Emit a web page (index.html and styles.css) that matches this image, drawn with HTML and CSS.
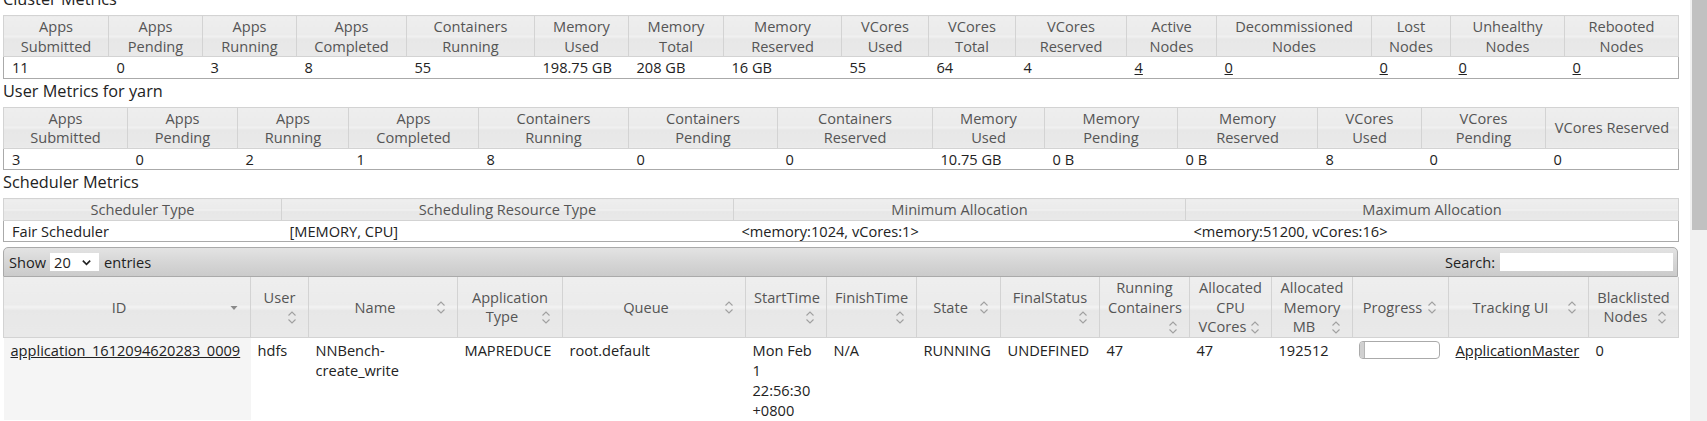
FILE: index.html
```html
<!DOCTYPE html>
<html>
<head>
<meta charset="utf-8">
<title>Applications</title>
<link rel="stylesheet" href="styles.css">
</head>
<body>
<svg class="defs" width="0" height="0" aria-hidden="true">
  <symbol id="ico-sort" viewBox="0 0 16 16"><path d="M4.5 6.5 8 3 11.5 6.5M4.5 10.5 8 14 11.5 10.5" fill="none" stroke="#a0a0a0" stroke-width="1.1"/></symbol>
  <symbol id="ico-desc" viewBox="0 0 16 16"><path d="M4.5 7h7L8 11z" fill="#8a8a8a"/></symbol>
  <symbol id="ico-chev" viewBox="0 0 12 12"><path d="M2 4 6 8 10 4" fill="none" stroke="#222" stroke-width="1.8"/></symbol>
</svg>
<div class="page">
  <div class="main">
    <h3 class="title title-first">Cluster Metrics</h3>
    <table class="metrics cluster">
      <colgroup><col><col><col><col><col><col><col><col><col><col><col><col><col><col><col><col></colgroup>
      <thead>
        <tr>
          <th>Apps<br>Submitted</th><th>Apps<br>Pending</th><th>Apps<br>Running</th><th>Apps<br>Completed</th>
          <th>Containers<br>Running</th><th>Memory<br>Used</th><th>Memory<br>Total</th><th>Memory<br>Reserved</th>
          <th>VCores<br>Used</th><th>VCores<br>Total</th><th>VCores<br>Reserved</th><th>Active<br>Nodes</th>
          <th>Decommissioned<br>Nodes</th><th>Lost<br>Nodes</th><th>Unhealthy<br>Nodes</th><th>Rebooted<br>Nodes</th>
        </tr>
      </thead>
      <tbody>
        <tr>
          <td>11</td><td>0</td><td>3</td><td>8</td><td>55</td><td>198.75 GB</td><td>208 GB</td><td>16 GB</td>
          <td>55</td><td>64</td><td>4</td><td><a href="#">4</a></td><td><a href="#">0</a></td><td><a href="#">0</a></td>
          <td><a href="#">0</a></td><td><a href="#">0</a></td>
        </tr>
      </tbody>
    </table>

    <h3 class="title">User Metrics for yarn</h3>
    <table class="metrics user">
      <colgroup><col><col><col><col><col><col><col><col><col><col><col><col><col></colgroup>
      <thead>
        <tr>
          <th>Apps<br>Submitted</th><th>Apps<br>Pending</th><th>Apps<br>Running</th><th>Apps<br>Completed</th>
          <th>Containers<br>Running</th><th>Containers<br>Pending</th><th>Containers<br>Reserved</th>
          <th>Memory<br>Used</th><th>Memory<br>Pending</th><th>Memory<br>Reserved</th>
          <th>VCores<br>Used</th><th>VCores<br>Pending</th><th>VCores Reserved</th>
        </tr>
      </thead>
      <tbody>
        <tr>
          <td>3</td><td>0</td><td>2</td><td>1</td><td>8</td><td>0</td><td>0</td><td>10.75 GB</td><td>0 B</td><td>0 B</td>
          <td>8</td><td>0</td><td>0</td>
        </tr>
      </tbody>
    </table>

    <h3 class="title">Scheduler Metrics</h3>
    <table class="metrics sched">
      <colgroup><col><col><col><col></colgroup>
      <thead>
        <tr><th>Scheduler Type</th><th>Scheduling Resource Type</th><th>Minimum Allocation</th><th>Maximum Allocation</th></tr>
      </thead>
      <tbody>
        <tr><td>Fair Scheduler</td><td>[MEMORY, CPU]</td><td>&lt;memory:1024, vCores:1&gt;</td><td>&lt;memory:51200, vCores:16&gt;</td></tr>
      </tbody>
    </table>

    <div class="toolbar">
      <label class="length">Show
        <span class="len-box"><select><option>20</option><option>40</option><option>60</option></select><svg class="chev"><use href="#ico-chev"/></svg></span>
        entries</label>
      <label class="search">Search: <input type="text"></label>
    </div>
    <table class="apps">
      <colgroup><col><col><col><col><col><col><col><col><col><col><col><col><col><col><col></colgroup>
      <thead>
        <tr>
          <th><span class="sort"><svg><use href="#ico-desc"/></svg></span>ID</th>
          <th>User<br><span class="sort"><svg><use href="#ico-sort"/></svg></span></th>
          <th><span class="sort"><svg><use href="#ico-sort"/></svg></span>Name</th>
          <th>Application<br><span class="sort"><svg><use href="#ico-sort"/></svg></span>Type</th>
          <th><span class="sort"><svg><use href="#ico-sort"/></svg></span>Queue</th>
          <th>StartTime<br><span class="sort"><svg><use href="#ico-sort"/></svg></span></th>
          <th>FinishTime<br><span class="sort"><svg><use href="#ico-sort"/></svg></span></th>
          <th><span class="sort"><svg><use href="#ico-sort"/></svg></span>State</th>
          <th>FinalStatus<br><span class="sort"><svg><use href="#ico-sort"/></svg></span></th>
          <th>Running<br>Containers<br><span class="sort"><svg><use href="#ico-sort"/></svg></span></th>
          <th>Allocated<br>CPU<br><span class="sort"><svg><use href="#ico-sort"/></svg></span>VCores</th>
          <th>Allocated<br>Memory<br><span class="sort"><svg><use href="#ico-sort"/></svg></span>MB</th>
          <th><span class="sort"><svg><use href="#ico-sort"/></svg></span>Progress</th>
          <th><span class="sort"><svg><use href="#ico-sort"/></svg></span>Tracking UI</th>
          <th>Blacklisted<br><span class="sort"><svg><use href="#ico-sort"/></svg></span>Nodes</th>
        </tr>
      </thead>
      <tbody>
        <tr>
          <td class="sorted"><a href="#">application_1612094620283_0009</a></td>
          <td>hdfs</td>
          <td>NNBench-create_write</td>
          <td>MAPREDUCE</td>
          <td>root.default</td>
          <td>Mon Feb 1 22:56:30 +0800</td>
          <td>N/A</td>
          <td>RUNNING</td>
          <td>UNDEFINED</td>
          <td>47</td>
          <td>47</td>
          <td>192512</td>
          <td><div class="bar" title="0.0%"><div class="bar-val"></div></div></td>
          <td><a href="#">ApplicationMaster</a></td>
          <td>0</td>
        </tr>
      </tbody>
    </table>
  </div>
  <div class="scrollbar"><div class="thumb"></div></div>
</div>
</body>
</html>
```

FILE: styles.css
```css
* { box-sizing: border-box; }
html, body { margin: 0; height: 100%; }
body {
  font-family: "Open Sans", "Noto Sans", "DejaVu Sans", sans-serif;
  font-size: 14.6px;
  color: #222;
  background: #fff;
  overflow: hidden;
}
.defs { position: absolute; width: 0; height: 0; overflow: hidden; }

.page { display: flex; height: 100vh; }
.main { flex: 1; min-width: 0; padding: 0 12px 0 3px; overflow: hidden; }
.scrollbar { flex: none; width: 17px; background: #f1f1f1; }
.thumb { height: 230px; margin-left: 2px; background: #c1c1c1; }

.title {
  font-size: 16.3px;
  line-height: 25px;
  font-weight: normal;
  color: #222;
  margin: 0 0 3px;
}
.title-first { margin-top: -13px; }

table { border-collapse: collapse; width: 100%; table-layout: fixed; }
a { color: #222; text-decoration: underline; }

.metrics { border: 1px solid #aaa; }
.metrics th,
.apps th {
  background: linear-gradient(to bottom, #eeeeee 0%, #ebebeb 46%, #f2f2f2 50%, #e7e7e7 56%, #e9e9e9 100%);
  color: #555;
  font-weight: normal;
  line-height: 19.5px;
  padding: 1px 8px 0;
  border: 1px solid #d3d3d3;
  text-align: center;
  vertical-align: middle;
}
.metrics td {
  line-height: 19.5px;
  padding: 1px 8px 0;
  text-align: left;
  white-space: nowrap;
  overflow: hidden;
}

.cluster col:nth-child(1) { width: 105px; }
.cluster col:nth-child(2) { width: 94px; }
.cluster col:nth-child(3) { width: 94px; }
.cluster col:nth-child(4) { width: 110px; }
.cluster col:nth-child(5) { width: 128px; }
.cluster col:nth-child(6) { width: 94px; }
.cluster col:nth-child(7) { width: 95px; }
.cluster col:nth-child(8) { width: 118px; }
.cluster col:nth-child(9) { width: 87px; }
.cluster col:nth-child(10) { width: 87px; }
.cluster col:nth-child(11) { width: 111px; }
.cluster col:nth-child(12) { width: 90px; }
.cluster col:nth-child(13) { width: 155px; }
.cluster col:nth-child(14) { width: 79px; }
.cluster col:nth-child(15) { width: 114px; }
.cluster col:nth-child(16) { width: 114px; }

.user col:nth-child(1) { width: 124px; }
.user col:nth-child(2) { width: 110px; }
.user col:nth-child(3) { width: 111px; }
.user col:nth-child(4) { width: 130px; }
.user col:nth-child(5) { width: 150px; }
.user col:nth-child(6) { width: 149px; }
.user col:nth-child(7) { width: 155px; }
.user col:nth-child(8) { width: 112px; }
.user col:nth-child(9) { width: 133px; }
.user col:nth-child(10) { width: 140px; }
.user col:nth-child(11) { width: 104px; }
.user col:nth-child(12) { width: 124px; }
.user col:nth-child(13) { width: 133px; }

.sched col:nth-child(1) { width: 278px; }
.sched col:nth-child(2) { width: 452px; }
.sched col:nth-child(3) { width: 452px; }
.sched col:nth-child(4) { width: 493px; }

.toolbar {
  display: flex;
  align-items: center;
  justify-content: space-between;
  height: 30px;
  margin-top: 5px;
  padding: 0 4px 0 5px;
  border: 1px solid #aaa;
  border-radius: 5px 5px 0 0;
  background: linear-gradient(to bottom, #e3e3e3 0%, #d6d6d6 50%, #cbcbcb 100%);
  color: #222;
}
.length { display: flex; align-items: center; }
.len-box {
  display: inline-flex;
  align-items: center;
  width: 49px;
  height: 18px;
  margin: 0 5px 0 4px;
  padding-left: 4px;
  background: #fff;
}
.len-box select {
  appearance: none;
  -webkit-appearance: none;
  border: 0;
  background: transparent;
  font: inherit;
  color: #222;
  width: 27px;
  padding: 0;
  outline: none;
}
.chev { width: 11px; height: 11px; }
.search { display: flex; align-items: center; }
.search input {
  width: 173px;
  height: 18px;
  margin-left: 5px;
  border: 0;
  background: #fff;
  padding: 0 3px;
  font: inherit;
}

.apps col:nth-child(1) { width: 247px; }
.apps col:nth-child(2) { width: 58px; }
.apps col:nth-child(3) { width: 149px; }
.apps col:nth-child(4) { width: 105px; }
.apps col:nth-child(5) { width: 183px; }
.apps col:nth-child(6) { width: 81px; }
.apps col:nth-child(7) { width: 90px; }
.apps col:nth-child(8) { width: 84px; }
.apps col:nth-child(9) { width: 99px; }
.apps col:nth-child(10) { width: 90px; }
.apps col:nth-child(11) { width: 82px; }
.apps col:nth-child(12) { width: 81px; }
.apps col:nth-child(13) { width: 96px; }
.apps col:nth-child(14) { width: 140px; }
.apps col:nth-child(15) { width: 90px; }

.apps th { border-top: 0; }
.sort {
  float: right;
  width: 16px;
  height: 19.5px;
  display: flex;
  align-items: center;
}
.sort svg { width: 16px; height: 16px; display: block; }

.apps td {
  line-height: 20px;
  padding: 2px 7px 0;
  vertical-align: top;
  text-align: left;
}
.apps td.sorted { background: #f5f5f5; }

.bar {
  width: 81px;
  height: 18px;
  margin-left: -1px;
  margin-top: 1px;
  border: 1px solid #aaa;
  border-radius: 4px;
  background: #fff;
  overflow: hidden;
}
.bar-val {
  width: 5px;
  height: 100%;
  background: #d0d0d0;
  border-right: 1px solid #b5b5b5;
}
```
